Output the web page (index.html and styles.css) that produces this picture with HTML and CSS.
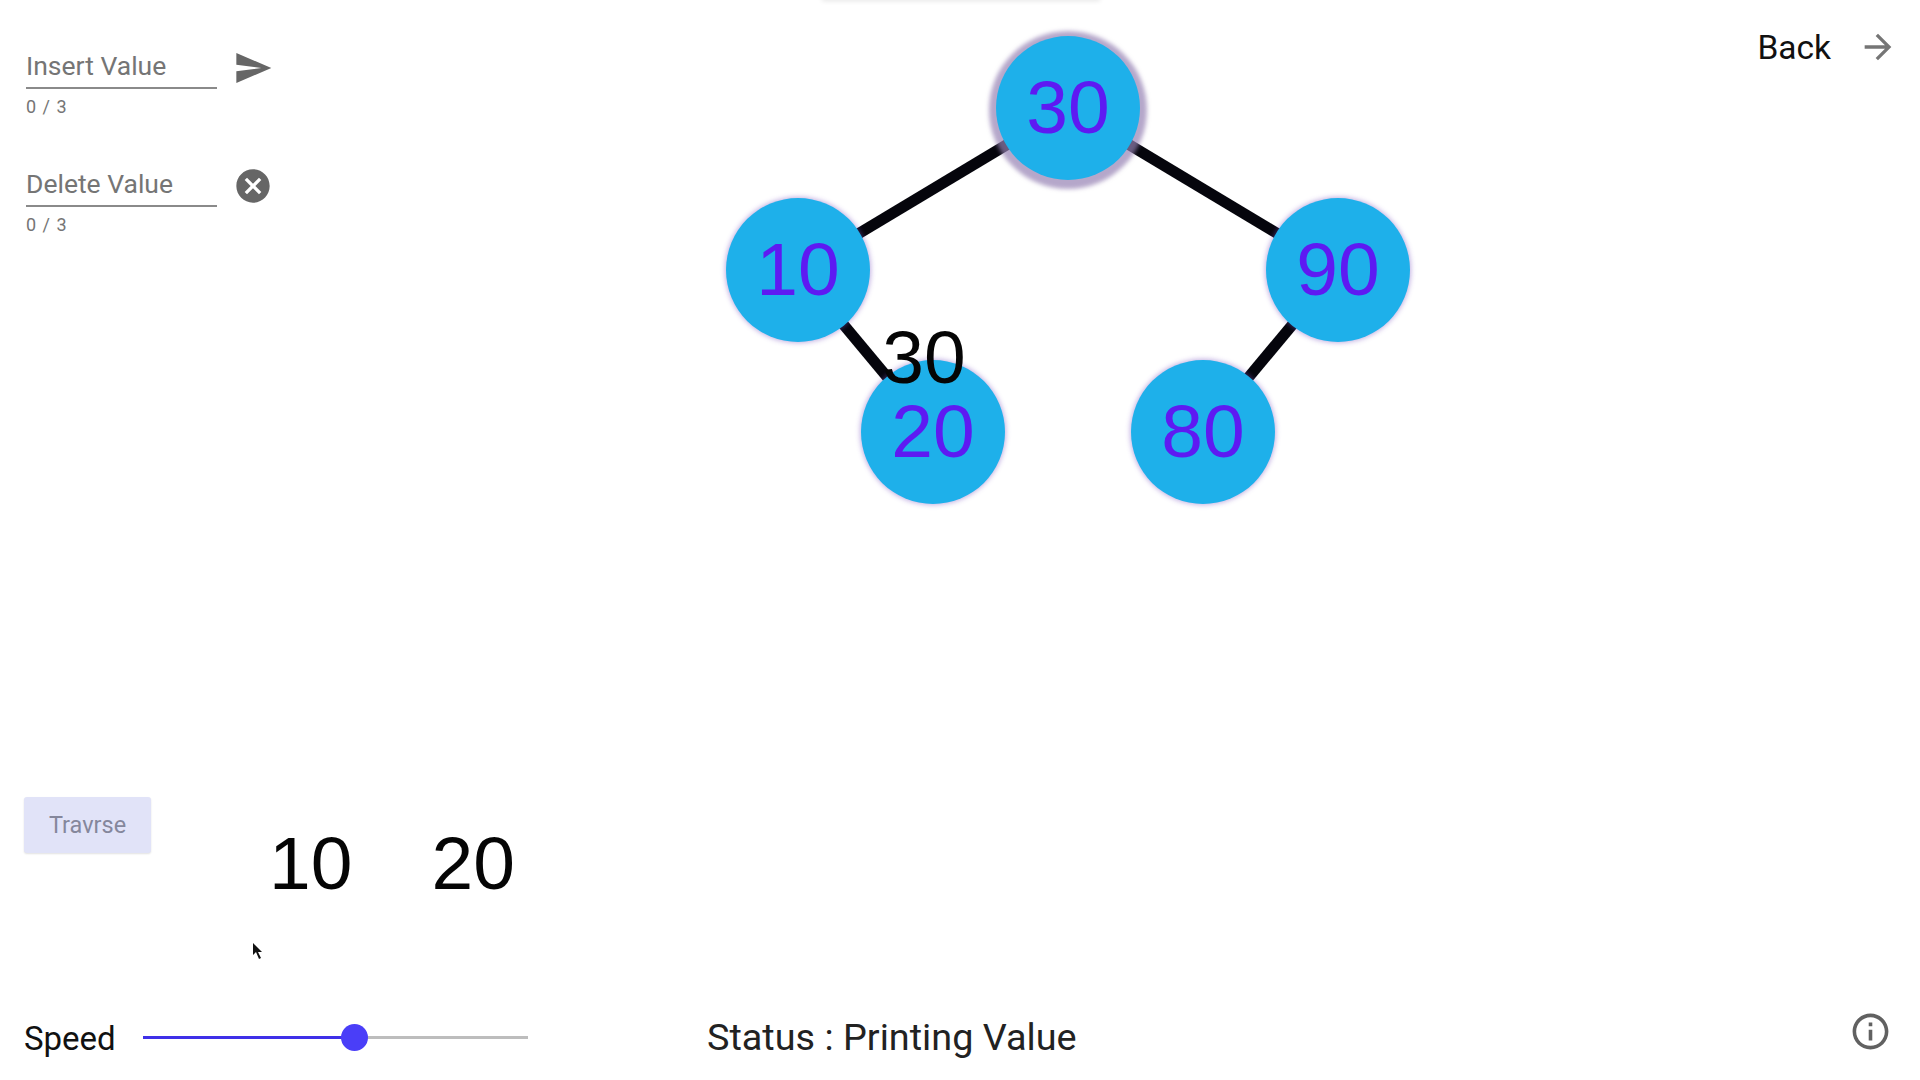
FILE: index.html
```html
<!DOCTYPE html>
<html lang="en">

<head>
    <meta charset="UTF-8">
    <meta name="viewport" content="width=device-width, initial-scale=1.0">
    <title>Binary Search Tree</title>
    <link rel="stylesheet" href="styles.css">
</head>

<body>
    <div class="page">
        <div class="top-shadow"></div>

        <section class="top">
            <div class="controls">
                <form class="field-row">
                    <div class="field">
                        <input type="text" placeholder="Insert Value">
                        <p class="helper">0 / 3</p>
                    </div>
                    <button type="button" class="icon-btn">
                        <svg viewBox="0 0 24 24" width="40" height="40"><path d="M2.01 21L23 12 2.01 3 2 10l15 2-15 2z"/></svg>
                    </button>
                </form>
                <form class="field-row">
                    <div class="field">
                        <input type="text" placeholder="Delete Value">
                        <p class="helper">0 / 3</p>
                    </div>
                    <button type="button" class="icon-btn">
                        <svg viewBox="0 0 24 24" width="40" height="40"><path d="M12 2C6.47 2 2 6.47 2 12s4.47 10 10 10 10-4.47 10-10S17.53 2 12 2zm5 13.59L15.59 17 12 13.41 8.41 17 7 15.59 10.59 12 7 8.41 8.41 7 12 10.59 15.59 7 17 8.41 13.41 12 17 15.59z"/></svg>
                    </button>
                </form>
            </div>

            <div class="tree">
                <svg class="edges" viewBox="0 0 700 540" width="700" height="540">
                    <line x1="368" y1="108" x2="98" y2="270"/>
                    <line x1="368" y1="108" x2="638" y2="270"/>
                    <line x1="98" y1="270" x2="233" y2="432"/>
                    <line x1="638" y1="270" x2="503" y2="432"/>
                </svg>
                <div class="node root n30">30</div>
                <div class="node n10">10</div>
                <div class="node n90">90</div>
                <div class="node n20">20</div>
                <div class="node n80">80</div>
                <div class="moving-value">30</div>
            </div>

            <a class="back" href="/">
                <span>Back</span>
                <svg viewBox="0 0 24 24" width="40" height="40"><path d="M12 4l-1.41 1.41L16.17 11H4v2h12.17l-5.58 5.59L12 20l8-8z"/></svg>
            </a>
        </section>

        <section class="middle">
            <button class="btn-traverse" disabled>Travrse</button>
            <div class="printed">
                <span>10</span>
                <span>20</span>
            </div>
        </section>

        <svg class="cursor" viewBox="0 0 10 17" width="10" height="17"><path d="M0 0l0 12 3-3 3 7 2-1-3-6 4 0z"/></svg>

        <footer class="footer">
            <span class="speed-label">Speed</span>
            <div class="slider">
                <div class="slider-fill"></div>
                <div class="slider-thumb"></div>
            </div>
            <span class="status">Status : Printing Value</span>
            <svg class="info" viewBox="0 0 24 24" width="43" height="43"><path d="M11 7h2v2h-2zm0 4h2v6h-2zm1-9C6.48 2 2 6.48 2 12s4.48 10 10 10 10-4.48 10-10S17.52 2 12 2zm0 18c-4.41 0-8-3.59-8-8s3.59-8 8-8 8 3.59 8 8-3.59 8-8 8z"/></svg>
        </footer>
    </div>
</body>

</html>
```

FILE: styles.css
```css
* {
    font-family: Roboto, Arial, sans-serif;
    margin: 0;
    padding: 0;
    box-sizing: border-box;
}

body {
    background: white;
}

.page {
    position: relative;
    width: 1920px;
    height: 1080px;
    overflow: hidden;
    display: flex;
    flex-direction: column;
}

.top-shadow {
    position: absolute;
    top: -6px;
    left: 822px;
    width: 278px;
    height: 6px;
    box-shadow: 0 1px 5px rgba(0, 0, 0, 0.1);
}

.top {
    display: flex;
    height: 797px;
}

.controls {
    flex: 0 0 700px;
    padding: 46px 0 0 26px;
    display: flex;
    flex-direction: column;
    gap: 47px;
}

.field-row {
    display: flex;
    align-items: flex-start;
    gap: 16px;
}

.field {
    width: 191px;
}

input {
    display: block;
    width: 100%;
    height: 43px;
    padding-bottom: 2px;
    border: none;
    border-bottom: 2px solid #8a8a8a;
    outline: none;
    font-size: 26.5px;
    color: #757575;
}

input::placeholder {
    color: #757575;
    opacity: 1;
}

.helper {
    margin-top: 7px;
    font-size: 18px;
    line-height: 21px;
    letter-spacing: 1px;
    color: #757575;
}

.icon-btn {
    display: block;
    background: none;
    border: none;
    height: 40px;
    margin-top: 2px;
    fill: #666;
}

.tree {
    position: relative;
    flex: 0 0 700px;
    height: 540px;
}

.edges {
    display: block;
}

.edges line {
    stroke: #05050c;
    stroke-width: 11;
}

.node,
.moving-value {
    position: absolute;
    width: 144px;
    height: 144px;
    display: flex;
    align-items: center;
    justify-content: center;
    font-family: "Liberation Sans", Arial, sans-serif;
    font-size: 75px;
}

.node {
    padding-bottom: 2px;
    border-radius: 50%;
    background: #1eb0ea;
    color: #5e1af2;
    box-shadow: 0 0 5px 1px rgba(120, 80, 190, 0.45);
}

.root {
    box-shadow: 0 2px 4px 7px rgba(150, 130, 180, 0.7);
}

.n30 { left: 296px; top: 36px; }
.n10 { left: 26px; top: 198px; }
.n90 { left: 566px; top: 198px; }
.n20 { left: 161px; top: 360px; }
.n80 { left: 431px; top: 360px; }

.moving-value {
    left: 152px;
    top: 285px;
    color: #050505;
}

.back {
    flex: 1;
    height: 40px;
    margin-top: 27px;
    padding-right: 22px;
    display: flex;
    align-items: center;
    justify-content: flex-end;
    gap: 27px;
    text-decoration: none;
    color: #111;
    font-size: 33.5px;
}

.back svg {
    fill: #757575;
}

.middle {
    position: relative;
    height: 193px;
}

.btn-traverse {
    position: relative;
    margin-left: 24px;
    width: 127px;
    height: 56px;
    border: none;
    border-radius: 3px;
    background: #e1e3f8;
    color: #85879c;
    font-size: 23.5px;
    box-shadow: 0 1px 2px rgba(0, 0, 0, 0.12);
}

.printed {
    position: absolute;
    top: 29px;
    left: 269px;
    display: flex;
    gap: 79px;
    font-family: "Liberation Sans", Arial, sans-serif;
    font-size: 75px;
    line-height: 74px;
    color: #050505;
}

.printed span {
    font-family: inherit;
}

.cursor {
    position: absolute;
    left: 253px;
    top: 943px;
    fill: #111;
}

.footer {
    flex: 1;
    display: flex;
    align-items: flex-start;
    padding: 24px 28px 0 24px;
}

.speed-label {
    width: 119px;
    margin-top: 2px;
    font-size: 33px;
    line-height: 46px;
    color: #111;
}

.slider {
    position: relative;
    width: 385px;
    height: 3px;
    margin-top: 22px;
    background: #bdbdbd;
}

.slider-fill {
    width: 211px;
    height: 3px;
    background: #3f30e8;
}

.slider-thumb {
    position: absolute;
    left: 198px;
    top: -12px;
    width: 27px;
    height: 27px;
    border-radius: 50%;
    background: #4a3ef8;
}

.status {
    margin-left: 179px;
    margin-top: 1px;
    font-size: 37.8px;
    line-height: 44px;
    color: #222;
}

.info {
    margin-left: auto;
    margin-top: -4px;
    fill: #616161;
}
```
